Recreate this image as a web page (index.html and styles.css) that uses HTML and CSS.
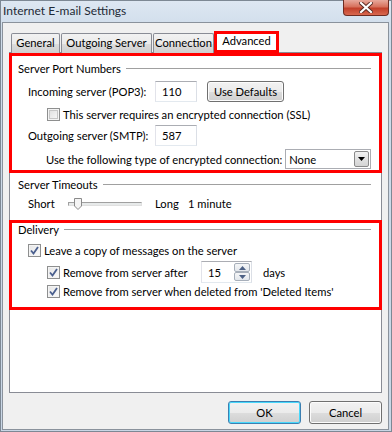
FILE: index.html
```html
<!DOCTYPE html>
<html lang="en">
<head>
    <meta charset="UTF-8">
    <title>Internet E-mail Settings</title>
    <link rel="stylesheet" href="styles.css">
</head>
<body>
    <div class="window">
        <div class="titlebar">
            <span class="title">Internet E-mail Settings</span>
            <span class="close">
                <svg width="14" height="11" viewBox="0 0 14 11">
                    <path d="M2 1 L12 10 M12 1 L2 10" stroke="#5a2a22" stroke-width="4" stroke-linecap="square"/>
                    <path d="M2 1 L12 10 M12 1 L2 10" stroke="#ffffff" stroke-width="2.2" stroke-linecap="square"/>
                </svg>
            </span>
        </div>

        <div class="client">
            <div class="tabs">
                <div class="tab t-general">General</div>
                <div class="tab t-outgoing">Outgoing Server</div>
                <div class="tab t-connection">Connection</div>
                <div class="tab active">Advanced</div>
            </div>

            <div class="panel">
                <!-- server ports -->
                <div class="section hl ports">
                    <div class="group-title"><span>Server Port Numbers</span></div>
                    <div class="row r-incoming">
                        <span class="label">Incoming server (POP3):</span>
                        <span class="textbox">110</span>
                        <span class="button defaults">Use Defaults</span>
                    </div>
                    <div class="row r-ssl">
                        <span class="cb"></span>
                        <span>This server requires an encrypted connection (SSL)</span>
                    </div>
                    <div class="row r-outgoing">
                        <span class="label">Outgoing server (SMTP):</span>
                        <span class="textbox">587</span>
                    </div>
                    <div class="row r-encrypt">
                        <span class="label-wide">Use the following type of encrypted connection:</span>
                        <span class="select">
                            <span>None</span>
                            <span class="drop">
                                <svg width="7" height="4" viewBox="0 0 7 4"><path d="M0 0 H7 L3.5 4 Z" fill="#000"/></svg>
                            </span>
                        </span>
                    </div>
                </div>

                <!-- timeouts -->
                <div class="section timeouts">
                    <div class="group-title"><span>Server Timeouts</span></div>
                    <div class="row r-slider">
                        <span class="short">Short</span>
                        <span class="slider">
                            <span class="track"></span>
                            <svg class="thumb" width="8" height="12" viewBox="0 0 8 12">
                                <path d="M0.5 0.5 H7.5 V8 L4 11.5 L0.5 8 Z" fill="#f4f4f4" stroke="#8a8a8a"/>
                            </svg>
                        </span>
                        <span class="long">Long</span>
                        <span>1 minute</span>
                    </div>
                </div>

                <!-- delivery -->
                <div class="section hl delivery">
                    <div class="group-title"><span>Delivery</span></div>
                    <div class="row r-leave">
                        <span class="cb checked"><svg width="9" height="9" viewBox="0 0 9 9"><path d="M1 4.5 L3.5 7.5 L8 1" fill="none" stroke="#4a5f8e" stroke-width="1.8"/></svg></span>
                        <span>Leave a copy of messages on the server</span>
                    </div>
                    <div class="row r-after">
                        <span class="cb checked"><svg width="9" height="9" viewBox="0 0 9 9"><path d="M1 4.5 L3.5 7.5 L8 1" fill="none" stroke="#4a5f8e" stroke-width="1.8"/></svg></span>
                        <span class="after-text">Remove from server after</span>
                        <span class="spinner">
                            <span class="value">15</span>
                            <span class="arrows">
                                <span class="arrow"><svg width="7" height="4" viewBox="0 0 7 4"><path d="M0 4 H7 L3.5 0 Z" fill="#4d6185"/></svg></span>
                                <span class="arrow"><svg width="7" height="4" viewBox="0 0 7 4"><path d="M0 0 H7 L3.5 4 Z" fill="#4d6185"/></svg></span>
                            </span>
                        </span>
                        <span class="days">days</span>
                    </div>
                    <div class="row r-deleted">
                        <span class="cb checked"><svg width="9" height="9" viewBox="0 0 9 9"><path d="M1 4.5 L3.5 7.5 L8 1" fill="none" stroke="#4a5f8e" stroke-width="1.8"/></svg></span>
                        <span>Remove from server when deleted from 'Deleted Items'</span>
                    </div>
                </div>
            </div>

            <div class="buttons">
                <span class="button ok">OK</span>
                <span class="button">Cancel</span>
            </div>
        </div>
    </div>
</body>
</html>
```

FILE: styles.css
```css
* {
    margin: 0;
    padding: 0;
    box-sizing: border-box;
}

body {
    width: 392px;
    height: 432px;
    overflow: hidden;
    font-family: Lato, "Noto Sans", sans-serif;
    font-size: 11.2px;
    color: #000;
    white-space: nowrap;
}

.window {
    width: 392px;
    height: 432px;
    background: linear-gradient(#dde7f2, #cfdcea 30px, #c9d6e5);
    border: 1px solid #7d8894;
    display: flex;
    flex-direction: column;
}

.titlebar {
    height: 21px;
    display: flex;
    align-items: flex-start;
    justify-content: space-between;
    padding-left: 2px;
}

.title {
    font-size: 12px;
    line-height: 20px;
    color: #1e2a36;
}

.close {
    width: 46px;
    height: 16px;
    margin-right: 2px;
    margin-top: -1px;
    border: 1px solid #6e2c22;
    border-top: none;
    border-radius: 0 0 4px 4px;
    background: linear-gradient(#e8a99c, #d7715c 45%, #c2402a 55%, #d8684f);
    display: flex;
    align-items: center;
    justify-content: center;
}

.client {
    flex: 1;
    margin: 0 2px 1px 1px;
    background: #f0f0f0;
    border: 1px solid #8a929c;
    padding: 8px 6px 0 6px;
    display: flex;
    flex-direction: column;
}

/* tabs */
.tabs {
    display: flex;
    align-items: flex-end;
    height: 22px;
    padding-left: 2px;
    margin-bottom: -1px;
    position: relative;
    z-index: 1;
}

.tab {
    height: 20px;
    margin-right: 1px;
    border: 1px solid #898c95;
    border-bottom: none;
    border-radius: 2px 2px 0 0;
    background: linear-gradient(#f2f2f2, #ebebeb 50%, #dddddd 51%, #cfcfcf);
    text-align: center;
    line-height: 18px;
}

.t-general { width: 49px; }
.t-outgoing { width: 91px; }
.t-connection { width: 61px; }

.tab.active {
    width: 65px;
    height: 22px;
    margin-left: -1px;
    border: 3px solid #ff0000;
    border-radius: 0;
    background: #fff;
    line-height: 14px;
}

.panel {
    height: 341px;
    background: #fff;
    border: 1px solid #898c95;
}

.section {
    border: 3px solid transparent;
    margin: 0 -1px;
    padding: 0 8px 0 6px;
}

.hl {
    border-color: #ff0000;
}

.group-title {
    display: flex;
    align-items: center;
    height: 16px;
}

.group-title::after {
    content: "";
    flex: 1;
    margin-left: 5px;
    border-top: 1px solid #a0a0a0;
}

.row {
    display: flex;
    align-items: center;
    padding-left: 10px;
}

.label {
    width: 127px;
}

.textbox {
    width: 42px;
    height: 21px;
    border: 1px solid #abadb3;
    border-color: #abadb3 #dbdfe6 #e3e9ef #e2e3ea;
    background: #fff;
    padding-left: 6px;
    line-height: 19px;
}

.button {
    height: 23px;
    border: 1px solid #707070;
    border-radius: 3px;
    background: linear-gradient(#f2f2f2, #ebebeb 50%, #dddddd 51%, #cfcfcf);
    box-shadow: inset 0 0 0 1px #fcfcfc;
    display: flex;
    align-items: center;
    justify-content: center;
}

.defaults {
    width: 77px;
    height: 21px;
    margin-left: 10px;
}

.cb {
    width: 13px;
    height: 13px;
    border: 1px solid #8e8f8f;
    background: linear-gradient(135deg, #dcdcdc, #fbfbfb);
    box-shadow: inset 0 0 0 1px #f4f4f4, inset 0 0 0 2px #c6c6c6;
    margin-right: 3px;
    display: flex;
    align-items: center;
    justify-content: center;
}

.cb.checked {
    box-shadow: inset 0 0 0 1px #f4f4f4;
    background: linear-gradient(135deg, #e6e6e6, #fafafa);
}

/* port rows */
.ports .group-title {
    margin-top: 4px;
}

.r-incoming {
    margin-top: 4px;
    height: 23px;
}

.r-ssl {
    margin-top: 1px;
    height: 21px;
    padding-left: 29px;
}

.r-outgoing {
    height: 21px;
}

.r-encrypt {
    margin-top: 3px;
    height: 21px;
    padding-left: 28px;
    padding-bottom: 1px;
}

.label-wide {
    width: 240px;
}

.select {
    width: 86px;
    height: 20px;
    border: 1px solid #abadb3;
    background: #fff;
    display: flex;
    align-items: center;
    justify-content: space-between;
    padding: 0 1px 0 3px;
}

.drop {
    width: 15px;
    height: 16px;
    border: 1px solid #8a8a8a;
    border-radius: 2px;
    background: linear-gradient(#f2f2f2, #e2e2e2 50%, #d4d4d4);
    display: flex;
    align-items: center;
    justify-content: center;
}

/* timeouts */
.r-slider {
    height: 21px;
    margin-top: 1px;
    margin-bottom: 3px;
}

.short {
    width: 40px;
}

.slider {
    width: 74px;
    height: 14px;
    position: relative;
    display: flex;
    align-items: center;
}

.track {
    width: 100%;
    height: 4px;
    border: 1px solid #b0b0b0;
    border-color: #a0a0a0 #e0e0e0 #e0e0e0 #a0a0a0;
    background: #e7eaea;
}

.thumb {
    position: absolute;
    left: 6px;
    top: 1px;
}

.long {
    margin-left: 13px;
    width: 33px;
}

/* delivery */
.delivery .group-title {
    height: 13px;
}

.r-leave {
    margin-top: 4px;
    height: 21px;
}

.r-after {
    height: 22px;
    padding-left: 29px;
}

.after-text {
    width: 138px;
}

.spinner {
    width: 51px;
    height: 22px;
    border: 1px solid #abadb3;
    border-color: #abadb3 #dbdfe6 #e3e9ef #e2e3ea;
    display: flex;
    justify-content: space-between;
    padding: 1px;
}

.value {
    padding-left: 5px;
    line-height: 19px;
}

.arrows {
    width: 16px;
    display: flex;
    flex-direction: column;
}

.arrow {
    flex: 1;
    border: 1px solid #a7afba;
    border-radius: 2px;
    background: linear-gradient(#f5f6f7, #e3e7ec);
    display: flex;
    align-items: center;
    justify-content: center;
}

.days {
    margin-left: 11px;
}

.r-deleted {
    height: 17px;
    padding-left: 29px;
    margin-bottom: 7px;
}

/* bottom buttons */
.buttons {
    display: flex;
    justify-content: flex-end;
    gap: 8px;
    margin-top: 8px;
}

.buttons .button {
    width: 73px;
}

.ok {
    border-color: #3c7fb1;
    box-shadow: inset 0 0 0 1px #48d8fb;
}
```
